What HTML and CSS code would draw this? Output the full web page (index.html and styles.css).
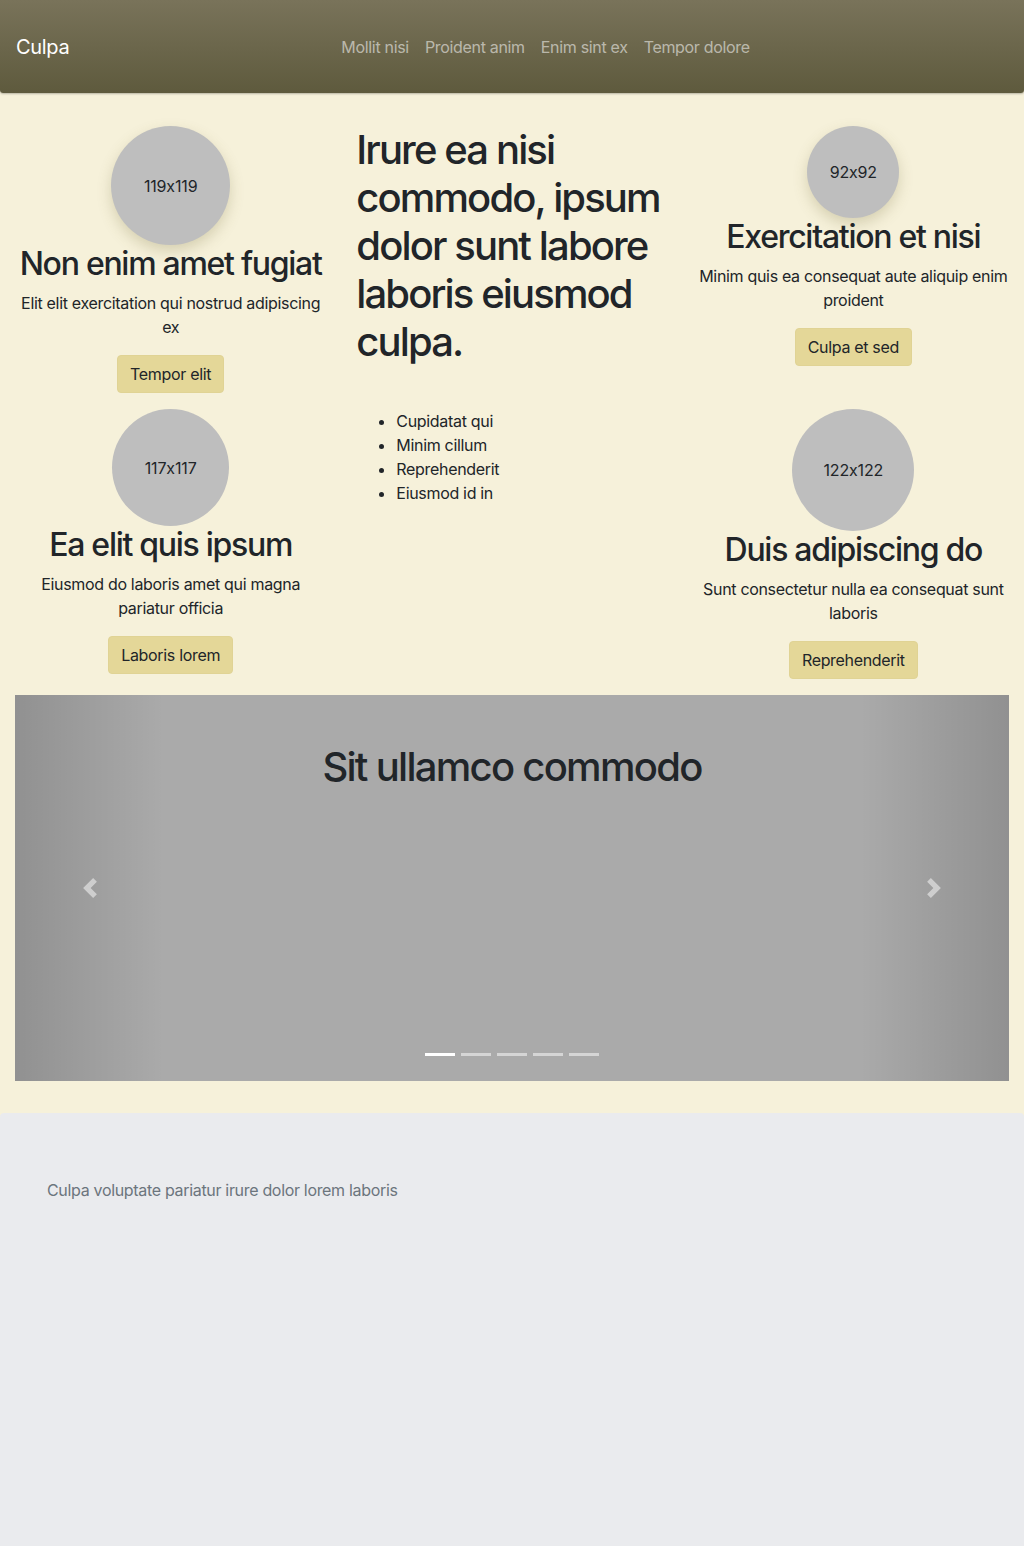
FILE: index.html
```html
<!DOCTYPE html>
<html lang="en">
<head>
<meta charset="utf-8">
<title>Culpa</title>
<link rel="stylesheet" href="styles.css">
</head>
<body>
<header class="navbar">
  <a class="brand" href="#">Culpa</a>
  <nav class="nav-links">
    <a href="#">Mollit nisi</a>
    <a href="#">Proident anim</a>
    <a href="#">Enim sint ex</a>
    <a href="#">Tempor dolore</a>
  </nav>
</header>

<main class="main">
  <div class="grid">
    <div class="feature f-l1">
      <div class="avatar" style="width:119px;height:119px">119x119</div>
      <h2>Non enim amet fugiat</h2>
      <p>Elit elit exercitation qui nostrud adipiscing ex</p>
      <a class="btn" href="#">Tempor elit</a>
    </div>
    <div class="middle">
      <h1>Irure ea nisi commodo, ipsum dolor sunt labore laboris eiusmod culpa.</h1>
      <ul>
        <li>Cupidatat qui</li>
        <li>Minim cillum</li>
        <li>Reprehenderit</li>
        <li>Eiusmod id in</li>
      </ul>
    </div>
    <div class="feature f-r1">
      <div class="avatar" style="width:92px;height:92px">92x92</div>
      <h2>Exercitation et nisi</h2>
      <p>Minim quis ea consequat aute aliquip enim proident</p>
      <a class="btn" href="#">Culpa et sed</a>
    </div>
    <div class="feature f-l2">
      <div class="avatar flat" style="width:117px;height:117px">117x117</div>
      <h2>Ea elit quis ipsum</h2>
      <p>Eiusmod do laboris amet qui magna pariatur officia</p>
      <a class="btn" href="#">Laboris lorem</a>
    </div>
    <div class="feature f-r2">
      <div class="avatar flat" style="width:122px;height:122px">122x122</div>
      <h2>Duis adipiscing do</h2>
      <p>Sunt consectetur nulla ea consequat sunt laboris</p>
      <a class="btn" href="#">Reprehenderit</a>
    </div>
  </div>

  <section class="carousel">
    <h2 class="carousel-title">Sit ullamco commodo</h2>
    <a class="control prev" href="#" aria-label="Previous">
      <svg viewBox="0 0 8 8" width="20" height="20"><path fill="#fff" d="M5.25 0l-4 4 4 4 1.5-1.5L4.25 4l2.5-2.5L5.25 0z"/></svg>
    </a>
    <a class="control next" href="#" aria-label="Next">
      <svg viewBox="0 0 8 8" width="20" height="20"><path fill="#fff" d="M2.75 0l-1.5 1.5L3.75 4l-2.5 2.5L2.75 8l4-4-4-4z"/></svg>
    </a>
    <ol class="indicators">
      <li class="active"></li>
      <li></li>
      <li></li>
      <li></li>
      <li></li>
    </ol>
  </section>
</main>

<footer class="footer">
  <p>Culpa voluptate pariatur irure dolor lorem laboris</p>
</footer>
</body>
</html>
```

FILE: styles.css
```css
* { box-sizing: border-box; }
html, body { margin: 0; padding: 0; }
body {
  background: #f6f1da;
  color: #212529;
  font-family: Inter, "Noto Sans", "Liberation Sans", sans-serif;
  font-feature-settings: "calt" 0;
  font-size: 16px;
  line-height: 1.5;
  letter-spacing: -0.02em;
  min-height: 1546px;
  display: flex;
  flex-direction: column;
}
a { text-decoration: none; }

.navbar {
  height: 93px;
  display: grid;
  grid-template-columns: repeat(3, minmax(0, 1fr));
  align-items: center;
  background: linear-gradient(to bottom, #79735a, #5e5a3d);
  border-radius: 0 0 3px 3px;
  box-shadow: 0 1px 2px rgba(0,0,0,0.25);
}
.brand {
  color: #fff;
  font-size: 20px;
  padding-left: 16px;
  line-height: 30px;
}
.nav-links {
  display: flex;
  gap: 16px;
  white-space: nowrap;
}
.nav-links a {
  color: rgba(255,255,255,0.55);
  font-size: 16px;
}

.main {
  padding: 33px 15px 32px;
}
.grid {
  display: grid;
  grid-template-columns: repeat(3, minmax(0, 1fr));
  grid-template-rows: auto auto;
  column-gap: 30px;
}
.f-l1 { grid-column: 1; grid-row: 1; }
.f-r1 { grid-column: 3; grid-row: 1; }
.f-l2 { grid-column: 1; grid-row: 2; }
.f-r2 { grid-column: 3; grid-row: 2; }
.middle { grid-column: 2; grid-row: 1 / span 2; }

.feature {
  display: flex;
  flex-direction: column;
  align-items: center;
  text-align: center;
  padding-bottom: 16px;
}
.avatar {
  border-radius: 50%;
  background: #bebebe;
  color: #212529;
  display: flex;
  align-items: center;
  justify-content: center;
  font-size: 16px;
  letter-spacing: -0.01em;
  box-shadow: 0 6px 14px rgba(120,110,60,0.25);
  flex-shrink: 0;
}
.avatar.flat { box-shadow: none; }
.feature h2 {
  font-size: 32px;
  font-weight: 500;
  line-height: 38px;
  margin: 0 0 8px;
  letter-spacing: -0.04em;
}
.feature p {
  margin: 0 0 16px;
}
.btn {
  display: inline-block;
  background: #e4d798;
  border: 1px solid #e0d394;
  color: #212529;
  padding: 6px 12px;
  line-height: 24px;
  border-radius: 4px;
  font-size: 16px;
}

.middle h1 {
  font-size: 40px;
  font-weight: 500;
  line-height: 48px;
  margin: 0;
  letter-spacing: -0.047em;
}
.middle ul {
  margin: 43px 0 0;
  padding-left: 40px;
}

.carousel {
  position: relative;
  height: 386px;
  background: #aaaaaa;
  text-align: center;
}
.carousel-title {
  margin: 0;
  padding-top: 48px;
  font-size: 40px;
  font-weight: 500;
  line-height: 48px;
  color: #212529;
  letter-spacing: -0.043em;
}
.control {
  position: absolute;
  top: 0;
  bottom: 0;
  width: 15%;
  display: flex;
  align-items: center;
  justify-content: center;
}
.control.prev { left: 0; background: linear-gradient(to right, rgba(0,0,0,0.15), rgba(0,0,0,0.001)); }
.control.next { right: 0; background: linear-gradient(to left, rgba(0,0,0,0.15), rgba(0,0,0,0.001)); }
.control svg { display: block; opacity: 0.5; }
.indicators {
  position: absolute;
  left: 0;
  right: 0;
  bottom: 25px;
  margin: 0;
  padding: 0;
  list-style: none;
  display: flex;
  justify-content: center;
  gap: 6px;
}
.indicators li {
  width: 30px;
  height: 3px;
  background: rgba(255,255,255,0.5);
}
.indicators li.active { background: #fff; }

.footer {
  flex: 1;
  background: #eaebee;
  border-radius: 4px 4px 0 0;
  padding: 65px 47px;
}
.footer p {
  margin: 0;
  color: #6c757d;
}
```
